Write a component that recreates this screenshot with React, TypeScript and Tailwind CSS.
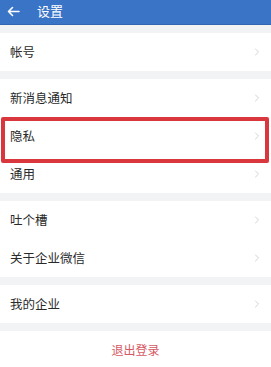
import { ChevronRight } from "lucide-react";

const font = { fontFamily: '"Noto Sans CJK SC", "Noto Sans", sans-serif' };

type Item = { label: string; marked?: boolean };

const groups: Item[][] = [
  [{ label: "帐号" }],
  [{ label: "新消息通知" }, { label: "隐私", marked: true }, { label: "通用" }],
  [{ label: "吐个槽" }, { label: "关于企业微信" }],
  [{ label: "我的企业" }],
];

function Row({ item }: { item: Item }) {
  return (
    <div className="relative flex h-[38px] items-center justify-between bg-white pl-[10px] pr-[8px]">
      <span className="text-[12.5px] leading-none text-[#2a2a2a]">{item.label}</span>
      <ChevronRight className="h-[12px] w-[12px] text-[#c4c4c4]" strokeWidth={1.5} />
      {item.marked && (
        <div className="pointer-events-none absolute left-[1px] right-[2px] top-0 z-10 h-[46px] rounded-[2px] border-[4px] border-[#d9363e]" />
      )}
    </div>
  );
}

export default function App() {
  return (
    <div className="h-[367px] w-[271px] overflow-hidden bg-[#f2f3f5]" style={font}>
      <div className="flex h-[25px] items-center gap-[17px] border-b border-[#3366b0] bg-[#3a74c6] pl-[7px]">
        <svg width="13" height="11" viewBox="0 0 13 11" fill="none" stroke="white" strokeWidth="1.6" strokeLinecap="round" strokeLinejoin="round" className="-mt-[2px]">
          <path d="M12 5.5H1.5M5.5 1.5 1.5 5.5l4 4" />
        </svg>
        <span className="-mt-[3px] text-[13px] leading-none text-white">设置</span>
      </div>
      <div className="flex flex-col gap-[8px] pt-[8px]">
        {groups.map((g, i) => (
          <div key={i} className="flex flex-col">
            {g.map((item) => (
              <Row key={item.label} item={item} />
            ))}
          </div>
        ))}
        <div className="flex h-[38px] items-center justify-center bg-white">
          <span className="text-[12px] leading-none text-[#d65a64]">退出登录</span>
        </div>
      </div>
    </div>
  );
}
